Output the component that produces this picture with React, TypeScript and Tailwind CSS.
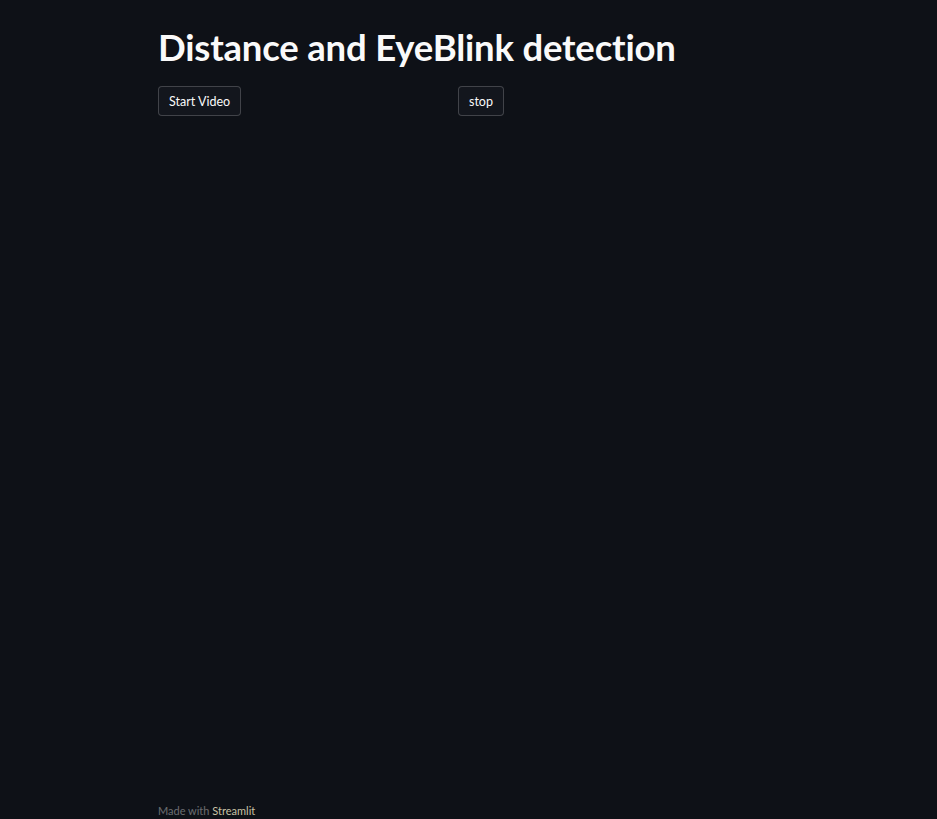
export default function App() {
  return (
    <div className="flex h-[819px] flex-col bg-[#0e1117] font-['Lato',sans-serif] text-[#fafafa]">
      <main className="flex-1 pl-[158px] pt-[24px]">
        <h1 className="text-[36.5px] leading-[46px] font-bold tracking-[-0.2px]">
          Distance and EyeBlink detection
        </h1>
        <div className="mt-[16px] grid grid-cols-[300px_300px]">
          <div>
            <button className="h-[30px] rounded-[4px] border border-[#fafafa]/20 bg-[#13161d] px-[10px] pt-[2px] text-[12.5px] text-[#fafafa]">
              Start Video
            </button>
          </div>
          <div>
            <button className="h-[30px] rounded-[4px] border border-[#fafafa]/20 bg-[#13161d] px-[10px] pt-[2px] text-[12.5px] text-[#fafafa]">
              stop
            </button>
          </div>
        </div>
      </main>
      <footer className="pl-[158px] text-[11px] leading-[16px] text-[#fafafa]/40">
        Made with <span className="text-[#c8c2a6]">Streamlit</span>
      </footer>
    </div>
  );
}
